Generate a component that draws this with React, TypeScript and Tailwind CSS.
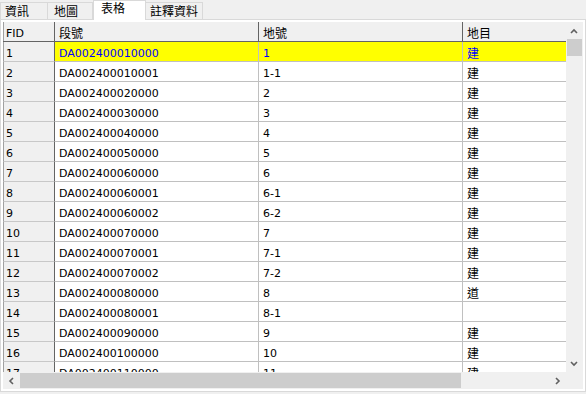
import React from "react";

const rows: [string, string, string, string][] = [
  ["1", "DA002400010000", "1", "建"],
  ["2", "DA002400010001", "1-1", "建"],
  ["3", "DA002400020000", "2", "建"],
  ["4", "DA002400030000", "3", "建"],
  ["5", "DA002400040000", "4", "建"],
  ["6", "DA002400050000", "5", "建"],
  ["7", "DA002400060000", "6", "建"],
  ["8", "DA002400060001", "6-1", "建"],
  ["9", "DA002400060002", "6-2", "建"],
  ["10", "DA002400070000", "7", "建"],
  ["11", "DA002400070001", "7-1", "建"],
  ["12", "DA002400070002", "7-2", "建"],
  ["13", "DA002400080000", "8", "道"],
  ["14", "DA002400080001", "8-1", ""],
  ["15", "DA002400090000", "9", "建"],
  ["16", "DA002400100000", "10", "建"],
  ["17", "DA002400110000", "11", "建"],
];

const latin = { fontFamily: '"DejaVu Sans", "Noto Sans CJK TC", sans-serif' };
const cjk = { fontFamily: '"Noto Sans CJK TC", "DejaVu Sans", sans-serif' };

function Chevron({ dir }: { dir: "up" | "down" | "left" | "right" }) {
  const pts: Record<string, string> = {
    up: "1,5 4,2 7,5",
    down: "1,1 4,4 7,1",
    left: "5,1 2,4 5,7",
    right: "2,1 5,4 2,7",
  };
  const vertical = dir === "up" || dir === "down";
  return (
    <svg width={vertical ? 8 : 7} height={vertical ? 6 : 8} viewBox={vertical ? "0 0 8 6" : "0 0 7 8"}>
      <polyline points={pts[dir]} fill="none" stroke="#606060" strokeWidth="1.6" />
    </svg>
  );
}

export default function App() {
  return (
    <div className="w-[586px] h-[394px] bg-[#f0f0f0] flex flex-col overflow-hidden text-black">
      {/* Tab strip */}
      <div className="h-[20px] shrink-0 flex items-end border-b border-[#d9d9d9] text-[12px]" style={cjk}>
        <div className="w-[48px] h-[17px] border-t border-x border-[#d9d9d9] bg-[#f0f0f0] pl-[4px] flex items-center leading-none">資訊</div>
        <div className="w-[45px] h-[17px] border-t border-r border-[#d9d9d9] bg-[#f0f0f0] pl-[6px] flex items-center leading-none">地圖</div>
        <div className="w-[53px] h-[20px] -mb-px border-t border-x border-[#d9d9d9] bg-white pl-[7px] pb-[5px] flex items-center leading-none">表格</div>
        <div className="w-[57px] h-[17px] border-t border-r border-[#d9d9d9] bg-[#f0f0f0] pl-[4px] flex items-center leading-none">註釋資料</div>
      </div>

      {/* Tab page */}
      <div className="h-[372px] shrink-0 bg-white border-x border-b border-[#d9d9d9] pl-[2px] pr-[2px] pt-[2px] pb-[2px]">
        <div className="w-[580px] h-[367px] flex flex-col">
          <div className="flex h-[350px]">
            {/* Viewport */}
            <div className="w-[563px] h-[350px] overflow-hidden flex flex-col text-[11px]" style={latin}>
              {/* Header */}
              <div className="flex h-[20px] shrink-0 bg-[#f0f0f0] border-b border-[#646464]">
                <div className="w-[52px] shrink-0 border-l border-[#a0a0a0] border-r border-r-[#646464] pl-[2px] pt-[5px] flex items-center">FID</div>
                <div className="w-[204px] shrink-0 border-r border-[#646464] pl-[4px] pt-[2px] flex items-center text-[12px]" style={cjk}>段號</div>
                <div className="w-[204px] shrink-0 border-r border-[#646464] pl-[4px] pt-[2px] flex items-center text-[12px]" style={cjk}>地號</div>
                <div className="w-[120px] shrink-0 pl-[4px] pt-[2px] flex items-center text-[12px]" style={cjk}>地目</div>
              </div>
              {rows.map((r, i) => {
                const sel = i === 0;
                return (
                  <div key={r[0]} className="flex h-[20px] shrink-0">
                    <div className="w-[52px] shrink-0 bg-[#f0f0f0] border-l border-[#a0a0a0] border-r border-r-[#646464] border-b border-b-[#c8c8c8] pl-[2px] pt-[5px] flex items-center">
                      {r[0]}
                    </div>
                    <div className={`w-[204px] shrink-0 border-r border-b border-[#c0c0c0] pl-[4px] pt-[5px] flex items-center ${sel ? "bg-[#ffff00] text-[#0000ff]" : "bg-white"}`}>
                      {r[1]}
                    </div>
                    <div className={`w-[204px] shrink-0 border-r border-b border-[#c0c0c0] pl-[4px] pt-[5px] flex items-center ${sel ? "bg-[#ffff00] text-[#0000ff]" : "bg-white"}`}>
                      {r[2]}
                    </div>
                    <div
                      className={`w-[120px] shrink-0 border-b border-[#c0c0c0] pl-[4px] pt-[2px] flex items-center text-[12px] ${sel ? "bg-[#ffff00] text-[#0000ff]" : "bg-white"}`}
                      style={cjk}
                    >
                      {r[3]}
                    </div>
                  </div>
                );
              })}
            </div>
            {/* Vertical scrollbar */}
            <div className="w-[17px] h-[350px] bg-[#f0f0f0] flex flex-col">
              <div className="h-[17px] flex items-center justify-center pr-[1px]">
                <Chevron dir="up" />
              </div>
              <div className="h-[17px] mx-[1px] bg-[#cdcdcd]" />
              <div className="flex-1" />
              <div className="h-[17px] flex items-center justify-center pr-[1px]">
                <Chevron dir="down" />
              </div>
            </div>
          </div>
          {/* Horizontal scrollbar */}
          <div className="flex h-[17px]">
            <div className="w-[563px] bg-[#f0f0f0] flex items-stretch">
              <div className="w-[17px] flex items-center justify-center">
                <Chevron dir="left" />
              </div>
              <div className="w-[441px] my-[1px] bg-[#cdcdcd]" />
              <div className="flex-1" />
              <div className="w-[17px] flex items-center justify-center">
                <Chevron dir="right" />
              </div>
            </div>
            <div className="w-[17px] bg-[#f0f0f0]" />
          </div>
        </div>
      </div>
    </div>
  );
}
